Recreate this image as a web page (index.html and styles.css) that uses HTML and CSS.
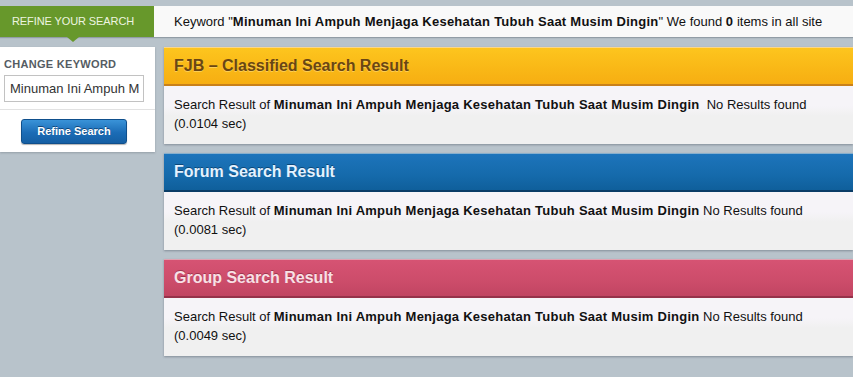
FILE: index.html
```html
<!DOCTYPE html>
<html>
<head>
<meta charset="utf-8">
<link rel="stylesheet" href="styles.css">
</head>
<body>
<div class="topbar">
  <div class="tab">REFINE YOUR SEARCH<span class="tab-arrow"></span></div>
  <div class="summary">Keyword "<b>Minuman Ini Ampuh Menjaga Kesehatan Tubuh Saat Musim Dingin</b>" We found <b>0</b> items in all site</div>
</div>
<div class="main">
  <div class="sidebar">
    <div class="side-top">
      <div class="side-label">CHANGE KEYWORD</div>
      <div class="side-input">Minuman Ini Ampuh M</div>
    </div>
    <div class="side-bottom">
      <div class="btn">Refine Search</div>
    </div>
  </div>
  <div class="content">
    <div class="panel">
      <div class="panel-head head-fjb">FJB – Classified Search Result</div>
      <div class="panel-body">Search Result of <b>Minuman Ini Ampuh Menjaga Kesehatan Tubuh Saat Musim Dingin</b>&nbsp; No Results found (0.0104 sec)</div>
    </div>
    <div class="panel">
      <div class="panel-head head-forum">Forum Search Result</div>
      <div class="panel-body">Search Result of <b>Minuman Ini Ampuh Menjaga Kesehatan Tubuh Saat Musim Dingin</b> No Results found (0.0081 sec)</div>
    </div>
    <div class="panel">
      <div class="panel-head head-group">Group Search Result</div>
      <div class="panel-body">Search Result of <b>Minuman Ini Ampuh Menjaga Kesehatan Tubuh Saat Musim Dingin</b> No Results found (0.0049 sec)</div>
    </div>
  </div>
</div>
</body>
</html>
```
FILE: styles.css
```css
html, body {
  margin: 0;
  padding: 0;
}
body {
  background: #b8c3cb;
  font-family: "Liberation Sans", Arial, sans-serif;
  font-size: 13px;
  color: #111;
  width: 853px;
  height: 377px;
  overflow: hidden;
}
b {
  letter-spacing: 0.25px;
}
.topbar {
  display: flex;
  margin-top: 6px;
  height: 31px;
  box-shadow: 0 1px 1px rgba(90,100,110,0.4);
}
.tab {
  position: relative;
  width: 154px;
  box-sizing: border-box;
  padding-left: 12px;
  background: #67982b;
  color: #eef5e0;
  font-size: 11px;
  line-height: 31px;
  letter-spacing: -0.1px;
}
.tab-arrow {
  position: absolute;
  left: 67px;
  top: 31px;
  width: 0;
  height: 0;
  border-left: 6px solid transparent;
  border-right: 6px solid transparent;
  border-top: 5px solid #67982b;
}
.summary {
  flex: 1;
  background: #f9f9f9;
  padding-left: 20px;
  line-height: 31px;
  font-size: 13px;
  white-space: nowrap;
}
.main {
  display: flex;
  align-items: flex-start;
  margin-top: 10px;
}
.sidebar {
  width: 155px;
  background: #fff;
  box-shadow: 0 1px 2px rgba(80,90,100,0.35);
}
.side-top {
  padding: 10px 4px 7px 4px;
  border-bottom: 1px solid #e2e2e2;
}
.side-label {
  font-size: 11px;
  font-weight: bold;
  color: #555c63;
  letter-spacing: 0.3px;
  line-height: 14px;
}
.side-input {
  margin-top: 4px;
  height: 27px;
  border: 1px solid #c2c2c2;
  box-sizing: border-box;
  width: 140px;
  padding-left: 5px;
  font-size: 13px;
  line-height: 26px;
  color: #333;
  white-space: nowrap;
  overflow: hidden;
}
.side-bottom {
  padding: 9px 0 8px 21px;
}
.btn {
  width: 106px;
  height: 25px;
  box-sizing: border-box;
  border: 1px solid #0f4f8c;
  border-radius: 3px;
  background: linear-gradient(#3a93d8, #1b6cb6 55%, #155fa3);
  color: #fff;
  font-size: 11px;
  font-weight: bold;
  text-align: center;
  line-height: 23px;
  text-shadow: 0 -1px 0 rgba(0,30,70,0.6);
  box-shadow: 0 1px 1px rgba(0,0,0,0.3);
}
.content {
  flex: 1;
  margin-left: 9px;
}
.panel {
  margin-bottom: 9px;
  background: #f0f0f0;
  box-shadow: 0 1px 2px rgba(70,80,90,0.45);
}
.panel-head {
  height: 36px;
  line-height: 36px;
  padding-left: 10px;
  font-size: 16px;
  font-weight: bold;
  border-top: 1px solid rgba(255,255,255,0.5);
}
.head-fjb {
  background: linear-gradient(#fdc51e, #f9b716 60%, #f7ae12);
  border-bottom: 2px solid #c9801a;
  color: #6a4613;
  text-shadow: 0 1px 0 rgba(255,230,150,0.5);
}
.head-forum {
  background: linear-gradient(#1d74bb, #156aab 60%, #0f5f9b);
  border-bottom: 2px solid #0a3c66;
  color: #e4f2ff;
  text-shadow: 0 -1px 0 rgba(0,30,60,0.5);
}
.head-group {
  background: linear-gradient(#d65373, #cc4c6a 60%, #c14562);
  border-bottom: 2px solid #96324a;
  color: #f8e0e6;
  text-shadow: 0 -1px 0 rgba(80,10,30,0.4);
}
.panel-body {
  padding: 9px 10px 11px 10px;
  line-height: 19px;
  font-size: 13px;
  background: linear-gradient(#f6f4f8 0, #f6f4f8 20px, #f0f0f0 30px);
  color: #111;
}
```
